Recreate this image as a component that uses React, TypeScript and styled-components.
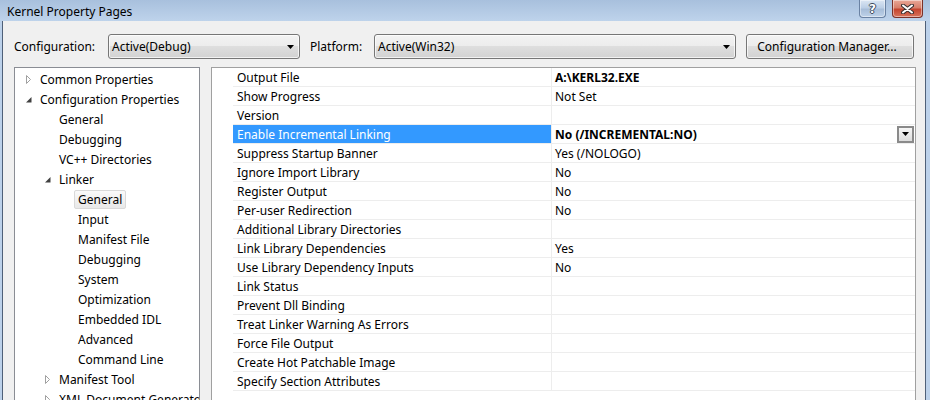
import React from 'react';
import styled, { createGlobalStyle } from 'styled-components';

const Global = createGlobalStyle`
  html, body { margin: 0; padding: 0; background: #fff; }
  body {
    font-family: "Noto Sans", "Liberation Sans", sans-serif;
    font-size: 12px;
    color: #000;
  }
`;

const Window = styled.div`
  width: 930px;
  height: 400px;
  overflow: hidden;
  display: flex;
  flex-direction: column;
  background: #bcd1ea;
`;

const TitleBar = styled.div`
  height: 21px;
  flex: none;
  display: flex;
  align-items: flex-start;
  background: linear-gradient(#a8c0dd, #bed3eb);
`;

const Title = styled.div`
  flex: 1;
  padding: 3px 0 0 7px;
  line-height: 17px;
  color: #000;
`;

const CaptionButtons = styled.div`
  display: flex;
  gap: 6px;
  margin-right: 7px;
`;

const CaptionButton = styled.div<{ $variant: 'help' | 'close' }>`
  width: ${p => (p.$variant === 'close' ? 31 : 27)}px;
  height: 18px;
  box-sizing: border-box;
  border: 1px solid ${p => (p.$variant === 'close' ? '#7b3128' : '#6a82a3')};
  border-top: none;
  border-radius: 0 0 4px 4px;
  background: ${p =>
    p.$variant === 'close'
      ? 'linear-gradient(#e9a897, #d77f6b 45%, #c5452f 55%, #d7735b)'
      : 'linear-gradient(#dbe6f3, #bccfe6 45%, #a7bdd8 55%, #bed2e9)'};
  box-shadow: inset 0 0 0 1px rgba(255, 255, 255, 0.45);
  display: flex;
  align-items: center;
  justify-content: center;
`;

const HelpGlyph = styled.span`
  font-family: "DejaVu Sans", sans-serif;
  font-weight: bold;
  font-size: 12px;
  line-height: 12px;
  color: #fff;
  text-shadow: 1px 0 #3c4a5c, -1px 0 #3c4a5c, 0 1px #3c4a5c, 0 -1px #3c4a5c;
`;

const Frame = styled.div`
  flex: 1;
  display: flex;
  min-height: 0;
`;

const SideFrame = styled.div<{ $w: number }>`
  width: ${p => p.$w}px;
  flex: none;
  background: #bcd1ea;
`;

const Body = styled.div`
  flex: 1;
  min-width: 0;
  background: #f0f0f0;
  border-left: 1px solid #4f6078;
  border-right: 1px solid #4f6078;
  padding: 13px 9px 0 11px;
  display: flex;
  flex-direction: column;
`;

const Toolbar = styled.div`
  display: flex;
  align-items: center;
  height: 25px;
  flex: none;
`;

const FieldLabel = styled.span<{ $w: number; $gap?: number }>`
  width: ${p => p.$w}px;
  margin-left: ${p => p.$gap ?? 0}px;
  flex: none;
  white-space: nowrap;
`;

const Combo = styled.div<{ $w: number }>`
  width: ${p => p.$w}px;
  height: 25px;
  flex: none;
  box-sizing: border-box;
  border: 1px solid #767676;
  border-radius: 3px;
  background: linear-gradient(#f3f3f3, #ececec 50%, #dedede 50%, #d2d2d2);
  box-shadow: inset 0 0 0 1px rgba(255, 255, 255, 0.7);
  display: flex;
  align-items: center;
  padding: 0 5px 0 3px;
  white-space: nowrap;
`;

const ComboText = styled.span`
  flex: 1;
`;

const PushButton = styled.div<{ $w: number }>`
  width: ${p => p.$w}px;
  height: 25px;
  flex: none;
  margin-left: 10px;
  box-sizing: border-box;
  border: 1px solid #767676;
  border-radius: 3px;
  background: linear-gradient(#f3f3f3, #ececec 50%, #dedede 50%, #d2d2d2);
  box-shadow: inset 0 0 0 1px rgba(255, 255, 255, 0.7);
  display: flex;
  align-items: center;
  justify-content: center;
  white-space: nowrap;
  padding-right: 6px;
`;

const Main = styled.div`
  display: flex;
  gap: 11px;
  margin-top: 8px;
  height: 360px;
  flex: none;
`;

const TreePanel = styled.div`
  width: 186px;
  flex: none;
  box-sizing: border-box;
  border: 1px solid #8a8d94;
  background: #fff;
  padding-top: 1px;
  overflow: hidden;
`;

const TreeRow = styled.div<{ $level: number }>`
  height: 20px;
  display: flex;
  align-items: center;
  padding-left: ${p => 10 + p.$level * 19}px;
  white-space: nowrap;
`;

const Expander = styled.span`
  width: 15px;
  flex: none;
  display: flex;
  align-items: center;
`;

const TreeLabel = styled.span<{ $selected?: boolean }>`
  height: 19px;
  line-height: 17px;
  box-sizing: border-box;
  margin-left: -4px;
  padding: 0 3px;
  border: 1px solid ${p => (p.$selected ? '#d9d9d9' : 'transparent')};
  border-radius: 2px;
  background: ${p => (p.$selected ? 'linear-gradient(#fafafa, #e8e8e8)' : 'transparent')};
`;

const GridPanel = styled.div`
  width: 705px;
  flex: none;
  box-sizing: border-box;
  border: 1px solid #a0a0a0;
  background: #fff;
  padding-left: 21px;
  overflow: hidden;
`;

const GridRow = styled.div`
  display: grid;
  grid-template-columns: 318px 1fr;
  height: 19px;
  box-sizing: border-box;
  border-bottom: 1px solid #ededed;
`;

const NameCell = styled.div<{ $selected?: boolean }>`
  padding: 2px 0 0 4px;
  line-height: 16px;
  white-space: nowrap;
  background: ${p => (p.$selected ? '#3399ff' : 'transparent')};
  color: ${p => (p.$selected ? '#fff' : '#000')};
`;

const ValueCell = styled.div<{ $bold?: boolean }>`
  border-left: 1px solid #ededed;
  padding-left: 3px;
  white-space: nowrap;
  font-weight: ${p => (p.$bold ? 'bold' : 'normal')};
  display: flex;
  align-items: center;
`;

const ValueText = styled.span`
  flex: 1;
  padding-top: 2px;
  line-height: 16px;
`;

const CellDrop = styled.div`
  width: 17px;
  height: 17px;
  margin-right: 1px;
  box-sizing: border-box;
  border: 2px solid #8a8a8a;
  background: linear-gradient(#f6f6f6, #dcdcdc);
  display: flex;
  align-items: center;
  justify-content: center;
`;

const DownArrow = ({ w = 7 }: { w?: number }) => (
  <svg width={w} height={4} viewBox="0 0 7 4">
    <path d="M0 0H7L3.5 4Z" fill="#000" />
  </svg>
);

const CloseGlyph = () => (
  <svg width="13" height="10" viewBox="0 0 13 10">
    <path d="M2 1.5L11 8.5M11 1.5L2 8.5" stroke="#3a3030" strokeWidth="4" strokeLinecap="round" />
    <path d="M2 1.5L11 8.5M11 1.5L2 8.5" stroke="#fff" strokeWidth="2" strokeLinecap="round" />
  </svg>
);

const Collapsed = () => (
  <svg width="7" height="9" viewBox="0 0 7 9">
    <path d="M1.5 0.5L5.5 4.5L1.5 8.5Z" fill="none" stroke="#a0a0a0" />
  </svg>
);

const Expanded = () => (
  <svg width="7" height="9" viewBox="0 0 7 9">
    <path d="M6.5 2L6.5 7.5L1 7.5Z" fill="#404040" />
  </svg>
);

type Node = { label: string; level: number; exp?: 'open' | 'closed'; selected?: boolean };

const nodes: Node[] = [
  { label: 'Common Properties', level: 0, exp: 'closed' },
  { label: 'Configuration Properties', level: 0, exp: 'open' },
  { label: 'General', level: 1 },
  { label: 'Debugging', level: 1 },
  { label: 'VC++ Directories', level: 1 },
  { label: 'Linker', level: 1, exp: 'open' },
  { label: 'General', level: 2, selected: true },
  { label: 'Input', level: 2 },
  { label: 'Manifest File', level: 2 },
  { label: 'Debugging', level: 2 },
  { label: 'System', level: 2 },
  { label: 'Optimization', level: 2 },
  { label: 'Embedded IDL', level: 2 },
  { label: 'Advanced', level: 2 },
  { label: 'Command Line', level: 2 },
  { label: 'Manifest Tool', level: 1, exp: 'closed' },
  { label: 'XML Document Generator', level: 1, exp: 'closed' },
];

type Prop = { name: string; value?: string; bold?: boolean; selected?: boolean };

const props: Prop[] = [
  { name: 'Output File', value: 'A:\\KERL32.EXE', bold: true },
  { name: 'Show Progress', value: 'Not Set' },
  { name: 'Version' },
  { name: 'Enable Incremental Linking', value: 'No (/INCREMENTAL:NO)', bold: true, selected: true },
  { name: 'Suppress Startup Banner', value: 'Yes (/NOLOGO)' },
  { name: 'Ignore Import Library', value: 'No' },
  { name: 'Register Output', value: 'No' },
  { name: 'Per-user Redirection', value: 'No' },
  { name: 'Additional Library Directories' },
  { name: 'Link Library Dependencies', value: 'Yes' },
  { name: 'Use Library Dependency Inputs', value: 'No' },
  { name: 'Link Status' },
  { name: 'Prevent Dll Binding' },
  { name: 'Treat Linker Warning As Errors' },
  { name: 'Force File Output' },
  { name: 'Create Hot Patchable Image' },
  { name: 'Specify Section Attributes' },
];

export default function App() {
  return (
    <>
      <Global />
      <Window>
        <TitleBar>
          <Title>Kernel Property Pages</Title>
          <CaptionButtons>
            <CaptionButton $variant="help">
              <HelpGlyph>?</HelpGlyph>
            </CaptionButton>
            <CaptionButton $variant="close">
              <CloseGlyph />
            </CaptionButton>
          </CaptionButtons>
        </TitleBar>
        <Frame>
          <SideFrame $w={2} />
          <Body>
            <Toolbar>
              <FieldLabel $w={94}>Configuration:</FieldLabel>
              <Combo $w={192}>
                <ComboText>Active(Debug)</ComboText>
                <DownArrow />
              </Combo>
              <FieldLabel $w={64} $gap={10}>Platform:</FieldLabel>
              <Combo $w={362}>
                <ComboText>Active(Win32)</ComboText>
                <DownArrow />
              </Combo>
              <PushButton $w={168}>Configuration Manager...</PushButton>
            </Toolbar>
            <Main>
              <TreePanel>
                {nodes.map((n, i) => (
                  <TreeRow key={i} $level={n.level}>
                    <Expander>
                      {n.exp === 'closed' && <Collapsed />}
                      {n.exp === 'open' && <Expanded />}
                    </Expander>
                    <TreeLabel $selected={n.selected}>{n.label}</TreeLabel>
                  </TreeRow>
                ))}
              </TreePanel>
              <GridPanel>
                {props.map((p, i) => (
                  <GridRow key={i}>
                    <NameCell $selected={p.selected}>{p.name}</NameCell>
                    <ValueCell $bold={p.bold}>
                      <ValueText>{p.value ?? ''}</ValueText>
                      {p.selected && (
                        <CellDrop>
                          <DownArrow />
                        </CellDrop>
                      )}
                    </ValueCell>
                  </GridRow>
                ))}
              </GridPanel>
            </Main>
          </Body>
          <SideFrame $w={4} />
        </Frame>
      </Window>
    </>
  );
}
